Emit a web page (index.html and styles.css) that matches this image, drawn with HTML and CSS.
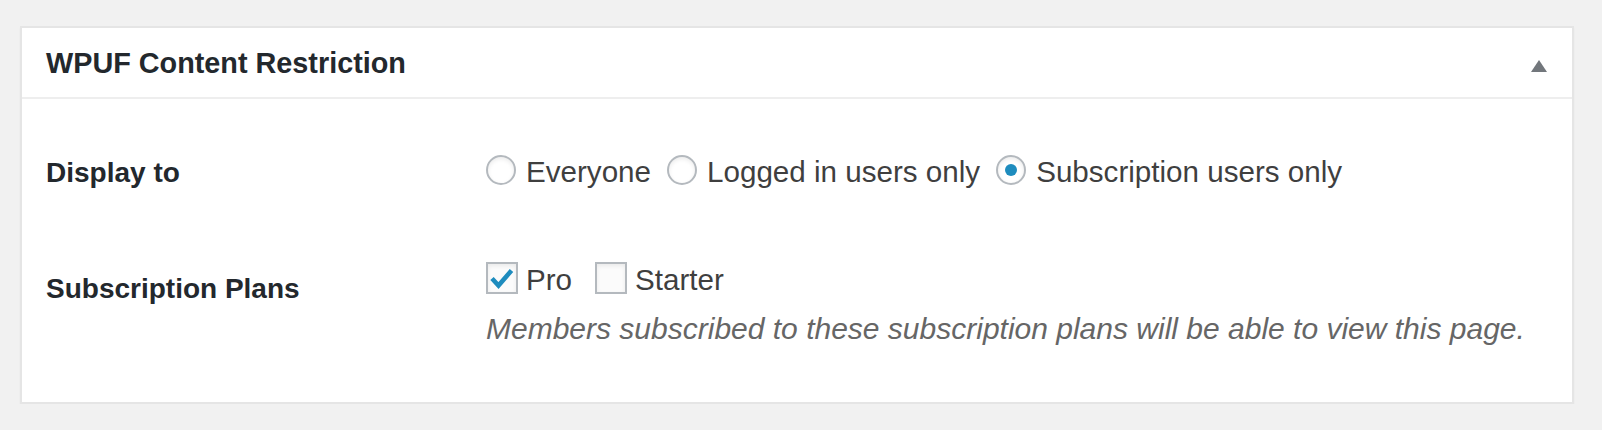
FILE: index.html
```html
<!DOCTYPE html>
<html lang="en">
<head>
<meta charset="utf-8">
<title>WPUF Content Restriction</title>
<link rel="stylesheet" href="styles.css">
</head>
<body>
<div class="wrap">
  <div class="postbox">
    <div class="postbox-header">
      <h2 class="hndle">WPUF Content Restriction</h2>
      <button class="toggle" type="button" aria-label="Toggle panel">
        <svg width="16" height="12" viewBox="0 0 16 12"><polygon points="8,0 16,12 0,12" fill="#72777c"/></svg>
      </button>
    </div>
    <div class="inside">
      <div class="form-row row-display">
        <div class="row-label">Display to</div>
        <div class="row-field">
          <div class="options">
            <label class="option"><span class="radio"></span><span class="opt-text">Everyone</span></label>
            <label class="option"><span class="radio"></span><span class="opt-text">Logged in users only</span></label>
            <label class="option"><span class="radio checked"></span><span class="opt-text">Subscription users only</span></label>
          </div>
        </div>
      </div>
      <div class="form-row row-plans">
        <div class="row-label">Subscription Plans</div>
        <div class="row-field">
          <div class="options checks">
            <label class="option"><span class="checkbox"><svg width="24" height="22" viewBox="0 0 24 22"><polyline points="2,10.5 8.5,17.5 21.5,2.5" fill="none" stroke="#1e8cbe" stroke-width="4.6" stroke-linecap="butt" stroke-linejoin="miter"/></svg></span><span class="opt-text">Pro</span></label>
            <label class="option"><span class="checkbox"></span><span class="opt-text">Starter</span></label>
          </div>
          <p class="description">Members subscribed to these subscription plans will be able to view this page.</p>
        </div>
      </div>
    </div>
  </div>
</div>
</body>
</html>
```

FILE: styles.css
```css
html, body {
  margin: 0;
  padding: 0;
}

body {
  background: #f1f1f1;
  font-family: "Liberation Sans", Arial, sans-serif;
  color: #444;
}

.wrap {
  padding: 26px 28px 0 20px;
}

.postbox {
  background: #fff;
  border: 2px solid #e5e5e5;
  box-shadow: 0 2px 2px rgba(0, 0, 0, 0.04);
}

.postbox-header {
  display: flex;
  align-items: center;
  justify-content: space-between;
  height: 69px;
  padding: 0 25px 0 24px;
  border-bottom: 2px solid #eee;
}

.hndle {
  margin: 0;
  font-size: 28.8px;
  font-weight: 700;
  line-height: 40px;
  color: #23282d;
}

.toggle {
  display: flex;
  padding: 0;
  margin: 7px 0 0 0;
  border: 0;
  background: none;
}

.inside {
  padding: 55px 24px 55px 24px;
}

.form-row {
  display: grid;
  grid-template-columns: 440px 1fr;
}

.row-plans {
  margin-top: 71px;
}

.row-label {
  font-size: 28px;
  font-weight: 700;
  line-height: 36px;
  color: #23282d;
}

.row-display .row-label {
  padding-top: 1px;
}

.row-plans .row-label {
  padding-top: 9px;
}

.options {
  display: flex;
  align-items: center;
  gap: 16px;
  height: 36px;
}

.options.checks {
  gap: 23px;
}

.option {
  display: flex;
  align-items: center;
  gap: 10px;
}

.checks .option {
  gap: 8px;
}

.opt-text {
  font-size: 29.6px;
  line-height: 36px;
  color: #3f3f3f;
}

.radio {
  box-sizing: border-box;
  width: 30px;
  height: 30px;
  margin-bottom: 4px;
  border: 2px solid #b4b9be;
  border-radius: 50%;
  background: #fff;
  box-shadow: inset 0 2px 4px rgba(0, 0, 0, 0.08);
  display: flex;
  align-items: center;
  justify-content: center;
}

.radio.checked::after {
  content: "";
  width: 12px;
  height: 12px;
  border-radius: 50%;
  background: #1e8cbe;
}

.checkbox {
  box-sizing: border-box;
  width: 32px;
  height: 32px;
  margin-bottom: 4px;
  border: 2px solid #b4b9be;
  background: #fbfbfb;
  box-shadow: inset 0 2px 4px rgba(0, 0, 0, 0.07);
  display: flex;
  align-items: center;
  justify-content: center;
}

.checkbox svg {
  margin-top: 1px;
}

.description {
  margin: 13px 0 0 0;
  font-size: 30px;
  line-height: 36px;
  font-style: italic;
  color: #666;
}
```
